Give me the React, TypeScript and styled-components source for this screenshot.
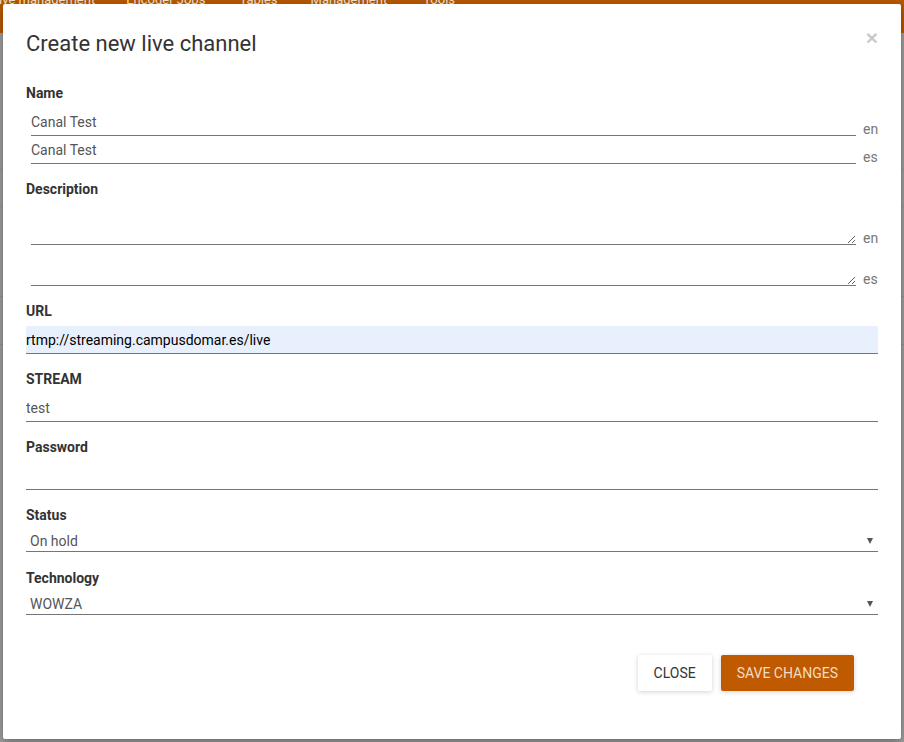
import React from "react";
import styled, { createGlobalStyle } from "styled-components";

const GlobalStyle = createGlobalStyle`
  html, body { margin: 0; padding: 0; }
  body { font-family: Roboto, "Liberation Sans", Arial, sans-serif; }
  * { box-sizing: border-box; }
`;

const Page = styled.div`
  position: relative;
  width: 904px;
  height: 742px;
  overflow: hidden;
  background: #9e9e9e;
`;

const NavBar = styled.div`
  height: 33px;
  background: #b85800;
  display: flex;
  align-items: flex-start;
  margin-left: -8px;
`;

const NavItem = styled.span<{ $gap: number }>`
  color: #f3e3d3;
  font-size: 13px;
  line-height: 18px;
  margin-top: -9px;
  margin-left: ${(p) => p.$gap}px;
  white-space: nowrap;
`;

const BackRows = styled.div`
  display: flex;
  flex-direction: column;
`;

const BackRow = styled.div<{ $h: number }>`
  height: ${(p) => p.$h}px;
  border-bottom: 1px solid #929292;
`;

const Modal = styled.div`
  position: absolute;
  top: 4px;
  left: 3px;
  width: 898px;
  height: 735px;
  background: #fff;
  border-radius: 2px;
  box-shadow: 0 3px 10px rgba(0, 0, 0, 0.35);
  display: flex;
  flex-direction: column;
  padding: 0 23px;
`;

const Header = styled.div`
  display: flex;
  justify-content: space-between;
  align-items: flex-start;
  padding-top: 28px;
  height: 79px;
`;

const Title = styled.h4`
  margin: 0;
  font-size: 22px;
  line-height: 24px;
  font-weight: 400;
  color: #333;
`;

const CloseX = styled.button`
  border: none;
  background: none;
  padding: 0;
  margin-top: -5px;
  font-family: "Liberation Sans", Arial, sans-serif;
  font-size: 21px;
  line-height: 21px;
  font-weight: 700;
  color: #c9c9c9;
  cursor: pointer;
`;

const Group = styled.div<{ $mt: number }>`
  display: flex;
  flex-direction: column;
  margin-top: ${(p) => p.$mt}px;
`;

const Label = styled.label`
  font-size: 14px;
  line-height: 20px;
  font-weight: 700;
  color: #333;
`;

const LangRow = styled.div<{ $mt?: number; $indent?: number }>`
  display: flex;
  align-items: flex-end;
  padding-left: ${(p) => p.$indent ?? 5}px;
  margin-top: ${(p) => p.$mt ?? 0}px;
`;

const Suffix = styled.span`
  width: 15px;
  margin-left: 7px;
  font-size: 14px;
  line-height: 16px;
  color: #777;
  position: relative;
  top: 1px;
`;

const TextInput = styled.input<{ $filled?: boolean }>`
  flex: 1;
  width: 100%;
  height: 28px;
  margin: 0;
  padding: 0;
  border: none;
  border-bottom: 1px solid #757575;
  background: ${(p) => (p.$filled ? "#e8f0fe" : "transparent")};
  font-family: Roboto, "Liberation Sans", Arial, sans-serif;
  font-size: 14px;
  color: ${(p) => (p.$filled ? "#000" : "#555")};
  outline: none;
`;

const TextArea = styled.textarea`
  flex: 1;
  height: 40px;
  margin: 0;
  padding: 0;
  border: none;
  border-bottom: 1px solid #757575;
  background: transparent;
  font-family: Roboto, "Liberation Sans", Arial, sans-serif;
  font-size: 14px;
  color: #555;
  resize: vertical;
  outline: none;
  display: block;
`;

const SelectWrap = styled.div`
  position: relative;
  margin-top: 3px;
`;

const Select = styled.select`
  width: 100%;
  height: 24px;
  appearance: none;
  -webkit-appearance: none;
  border: none;
  border-bottom: 1px solid #757575;
  border-radius: 0;
  background: transparent;
  padding: 2px 0 0 4px;
  font-family: Roboto, "Liberation Sans", Arial, sans-serif;
  font-size: 14px;
  color: #555;
  outline: none;
`;

const Arrow = styled.span`
  position: absolute;
  right: 5px;
  top: 10px;
  width: 0;
  height: 0;
  border-left: 3.5px solid transparent;
  border-right: 3.5px solid transparent;
  border-top: 6px solid #555;
  pointer-events: none;
`;

const Footer = styled.div`
  display: flex;
  justify-content: flex-end;
  gap: 9px;
  margin-top: 40px;
  padding-right: 24px;
`;

const Button = styled.button<{ $primary?: boolean }>`
  height: 36px;
  padding: 0 16px;
  border: none;
  border-radius: 2px;
  font-family: Roboto, "Liberation Sans", Arial, sans-serif;
  font-size: 14px;
  text-transform: uppercase;
  cursor: pointer;
  background: ${(p) => (p.$primary ? "#bf5a00" : "#fff")};
  color: ${(p) => (p.$primary ? "#f4dcc6" : "#333")};
  box-shadow: 0 1px 5px rgba(0, 0, 0, 0.18);
`;

export default function App() {
  return (
    <>
      <GlobalStyle />
      <Page>
        <NavBar>
          <NavItem $gap={0}>Live management</NavItem>
          <NavItem $gap={31}>Encoder Jobs</NavItem>
          <NavItem $gap={34}>Tables</NavItem>
          <NavItem $gap={33}>Management</NavItem>
          <NavItem $gap={36}>Tools</NavItem>
        </NavBar>
        <BackRows>
          <BackRow $h={137} />
          <BackRow $h={37} />
          <BackRow $h={90} />
          <BackRow $h={48} />
        </BackRows>
        <Modal>
          <Header>
            <Title>Create new live channel</Title>
            <CloseX aria-label="Close">×</CloseX>
          </Header>
          <Group $mt={0}>
            <Label>Name</Label>
            <LangRow $mt={5}>
              <TextInput defaultValue="Canal Test" />
              <Suffix>en</Suffix>
            </LangRow>
            <LangRow>
              <TextInput defaultValue="Canal Test" />
              <Suffix>es</Suffix>
            </LangRow>
          </Group>
          <Group $mt={15}>
            <Label>Description</Label>
            <LangRow $mt={6}>
              <TextArea rows={2} />
              <Suffix>en</Suffix>
            </LangRow>
            <LangRow $mt={1}>
              <TextArea rows={2} />
              <Suffix>es</Suffix>
            </LangRow>
          </Group>
          <Group $mt={15}>
            <Label>URL</Label>
            <LangRow $mt={5} $indent={0}>
              <TextInput $filled defaultValue="rtmp://streaming.campusdomar.es/live" />
            </LangRow>
          </Group>
          <Group $mt={15}>
            <Label>STREAM</Label>
            <LangRow $mt={5} $indent={0}>
              <TextInput defaultValue="test" />
            </LangRow>
          </Group>
          <Group $mt={15}>
            <Label>Password</Label>
            <LangRow $mt={5} $indent={0}>
              <TextInput type="password" />
            </LangRow>
          </Group>
          <Group $mt={15}>
            <Label>Status</Label>
            <SelectWrap>
              <Select defaultValue="hold">
                <option value="hold">On hold</option>
                <option value="live">Live</option>
              </Select>
              <Arrow />
            </SelectWrap>
          </Group>
          <Group $mt={16}>
            <Label>Technology</Label>
            <SelectWrap>
              <Select defaultValue="wowza">
                <option value="wowza">WOWZA</option>
                <option value="ams">AMS</option>
              </Select>
              <Arrow />
            </SelectWrap>
          </Group>
          <Footer>
            <Button>Close</Button>
            <Button $primary>Save changes</Button>
          </Footer>
        </Modal>
      </Page>
    </>
  );
}
